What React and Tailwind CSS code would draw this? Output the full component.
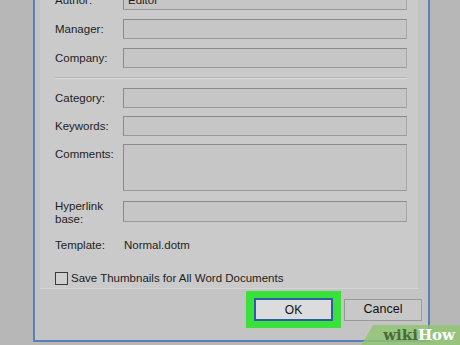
import React from 'react';

const Field = ({ label, value, tall }) => (
  <div className="flex items-start">
    <div className="w-[68px] shrink-0 pt-[3px] leading-[14px]">{label}</div>
    <div
      className={`w-[284px] ${tall ? 'h-[47px]' : 'h-[20px]'} border border-[#8a8a8a] border-r-[#a8a8a8] border-b-[#9a9a9a] bg-[#c6c6c6] px-[4px] leading-[18px]`}
    >
      {value}
    </div>
  </div>
);

const App = () => {
  return (
    <div className="relative w-[460px] h-[345px] overflow-hidden bg-[#b7b7b7] text-[11.5px] text-[#1e1e1e] font-['Liberation_Sans',Arial,sans-serif]">
      {/* Dialog window */}
      <div className="ml-[33px] w-[397px] h-[342px] border-x-2 border-b-2 border-[#5b80b8] bg-[#c4c4c4] flex flex-col">
        {/* Tab panel */}
        <div className="ml-[5px] w-[378px] h-[299px] border-b border-[#d6d6d6] bg-[#cacaca] flex flex-col pl-[15px] -mt-[10px]">
          <div className="flex flex-col gap-[9px]">
            <Field label="Author:" value="Editor" />
            <Field label="Manager:" />
            <Field label="Company:" />
          </div>
          <div className="mt-[9px] mb-[9px] w-[352px] h-[2px] border-t border-[#b4b4b4] border-b border-b-[#dcdcdc]" />
          <div className="flex flex-col gap-[8px]">
            <Field label="Category:" />
            <Field label="Keywords:" />
            <Field label="Comments:" tall />
          </div>
          <div className="mt-[10px] flex items-start">
            <div className="w-[68px] shrink-0 leading-[13px] -mt-[1px]">
              Hyperlink
              <br />
              base:
            </div>
            <div className="w-[284px] h-[21px] border border-[#8a8a8a] border-r-[#a8a8a8] border-b-[#9a9a9a] bg-[#c6c6c6]" />
          </div>
          <div className="mt-[11px] flex">
            <div className="w-[69px]">Template:</div>
            <div>Normal.dotm</div>
          </div>
          <label className="mt-[16px] flex items-center gap-[3px]">
            <span className="w-[13px] h-[13px] border border-[#3a3a3a] bg-[#cfcfcf]" />
            <span>Save Thumbnails for All Word Documents</span>
          </label>
        </div>

        {/* Buttons */}
        <div className="flex items-center mt-[2px] ml-[211px] gap-[3px]">
          <div className="w-[95px] h-[37px] bg-[#38e23a] flex items-center justify-center">
            <button className="w-[79px] h-[23px] border-2 border-[#2d5ca6] bg-[#dcdcdc] text-[12px] text-[#111]">
              OK
            </button>
          </div>
          <button className="w-[78px] h-[22px] border border-[#999999] bg-[#c8c8c8] text-[12.5px] text-[#111]">
            Cancel
          </button>
        </div>
      </div>

      {/* wikiHow watermark */}
      <div className="absolute right-[-10px] bottom-[-4px] w-[104px] h-[24px] -skew-x-[30deg] bg-[#8fc56f]/80" />
      <div className="absolute right-[5px] bottom-[2px] flex font-['DejaVu_Serif',serif] font-bold text-[15px] leading-none">
        <span className="text-[#4a6b38]">wiki</span>
        <span className="text-white">How</span>
      </div>
    </div>
  );
};

export default App;
